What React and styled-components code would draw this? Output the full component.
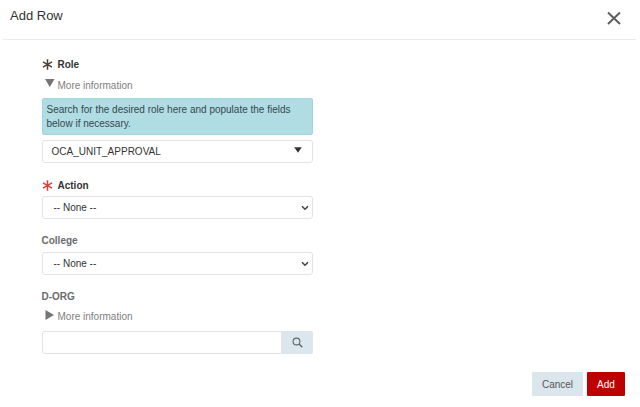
import React from "react";
import styled, { createGlobalStyle } from "styled-components";

const Global = createGlobalStyle`
  html, body { margin: 0; padding: 0; background: #fff; }
  body { font-family: "Liberation Sans", Arial, sans-serif; color: #333; }
`;

const Modal = styled.div`
  width: 640px;
  height: 407px;
  overflow: hidden;
  display: flex;
  flex-direction: column;
  background: #fff;
`;

const Header = styled.header`
  height: 39px;
  margin: 0 4px 0 3px;
  padding: 0 7px;
  display: flex;
  justify-content: space-between;
  border-bottom: 1px solid #ebebeb;
`;

const Title = styled.h1`
  margin: 8px 0 0;
  font-size: 13px;
  line-height: 16px;
  font-weight: 400;
  color: #333;
`;

const Close = styled.button`
  width: 16px;
  height: 16px;
  margin: 10px 7px 0 0;
  padding: 0;
  border: 0;
  background: none;
  display: flex;
`;

const Body = styled.main`
  flex: 1;
  width: 271px;
  margin-left: 41.5px;
  display: flex;
  flex-direction: column;
`;

const Label = styled.div`
  display: flex;
  align-items: center;
  gap: 5px;
  height: 14px;
  margin-top: ${(p) => p.$top}px;
  font-size: 10px;
  line-height: 14px;
  font-weight: 700;
  color: ${(p) => (p.$muted ? "#6b6b6b" : "#333")};

  svg {
    margin-top: -2px;
  }
`;

const More = styled.div`
  display: flex;
  align-items: center;
  gap: 2px;
  height: 14px;
  margin-top: ${(p) => p.$top}px;
  font-size: 10px;
  line-height: 14px;
  color: #808080;

  svg {
    margin: -4px 0 0 2px;
  }
`;

const Info = styled.div`
  box-sizing: border-box;
  height: 37px;
  margin-top: 5px;
  padding: 4px 4px 0;
  background: #b0dce4;
  border: 1px solid #a1d4de;
  border-radius: 2px;
  font-size: 10px;
  line-height: 14px;
  color: #35484d;
`;

const Field = styled.div`
  box-sizing: border-box;
  height: 23px;
  margin-top: ${(p) => p.$top}px;
  padding: 0 ${(p) => (p.$combo ? 10 : 3)}px 0 ${(p) => (p.$combo ? 9 : 11)}px;
  display: flex;
  align-items: center;
  justify-content: space-between;
  background: #fff;
  border: 1px solid #e3e3e3;
  border-radius: 3px;
  font-size: 10px;
  color: #333;
`;

const ComboArrow = styled.svg`
  margin-top: -3px;
`;

const SearchRow = styled.div`
  height: 23px;
  margin-top: 7px;
  display: flex;
`;

const SearchInput = styled.div`
  box-sizing: border-box;
  flex: 1;
  background: #fff;
  border: 1px solid #e3e3e3;
  border-radius: 3px 0 0 3px;
`;

const SearchButton = styled.div`
  width: 31px;
  display: flex;
  align-items: center;
  justify-content: center;
  background: #dbe6ed;
  border-radius: 0 2px 2px 0;
`;

const Footer = styled.footer`
  height: 35px;
  padding-right: 15px;
  display: flex;
  justify-content: flex-end;
  gap: 4px;
`;

const Button = styled.button`
  box-sizing: border-box;
  width: ${(p) => (p.$primary ? 38 : 51)}px;
  height: 24px;
  padding: 0;
  border: 0;
  border-radius: 1px;
  background: ${(p) => (p.$primary ? "#bd0000" : "#dae5ec")};
  color: ${(p) => (p.$primary ? "#fff" : "#555")};
  font-family: inherit;
  font-size: 10px;
`;

const Star = ({ color }) => (
  <svg width="11" height="11" viewBox="0 0 11 11" fill="none" stroke={color} strokeWidth="1.5">
    <path d="M5.5 0.3V10.7M1 2.9L10 8.1M10 2.9L1 8.1" />
  </svg>
);

const Triangle = ({ open }) => (
  <svg width="12" height="12" viewBox="0 0 12 12" fill="#757575">
    {open ? <path d="M1 1H10.5L5.75 9Z" /> : <path d="M1.5 1L10 6L1.5 11Z" />}
  </svg>
);

const Chevron = () => (
  <svg width="8" height="6" viewBox="0 0 8 6" fill="none" stroke="#444" strokeWidth="1.6">
    <path d="M1 1.2L4 4.2L7 1.2" />
  </svg>
);

export default function App() {
  return (
    <Modal>
      <Global />
      <Header>
        <Title>Add Row</Title>
        <Close aria-label="Close">
          <svg width="16" height="16" viewBox="0 0 16 16" stroke="#5f5f5f" strokeWidth="2">
            <path d="M2 2.5L14 14M14 2.5L2 14" />
          </svg>
        </Close>
      </Header>
      <Body>
        <Label $top={18}>
          <Star color="#4a4038" />
          Role
        </Label>
        <More $top={7}>
          <Triangle open />
          More information
        </More>
        <Info>Search for the desired role here and populate the fields below if necessary.</Info>
        <Field $top={5} $combo>
          OCA_UNIT_APPROVAL
          <ComboArrow width="8" height="6" viewBox="0 0 8 6" fill="#333">
            <path d="M0.2 0.3H7.8L4 5.8Z" />
          </ComboArrow>
        </Field>
        <Label $top={16}>
          <Star color="#d9413a" />
          Action
        </Label>
        <Field $top={3}>
          -- None --
          <Chevron />
        </Field>
        <Label $top={15} $muted>College</Label>
        <Field $top={4}>
          -- None --
          <Chevron />
        </Field>
        <Label $top={15} $muted>D-ORG</Label>
        <More $top={6}>
          <Triangle />
          More information
        </More>
        <SearchRow>
          <SearchInput />
          <SearchButton>
            <svg width="11" height="11" viewBox="0 0 11 11" fill="none" stroke="#5c6670" strokeWidth="1.1">
              <circle cx="4.5" cy="4.5" r="3.4" />
              <path d="M7 7L10.3 10.3" strokeWidth="1.5" />
            </svg>
          </SearchButton>
        </SearchRow>
      </Body>
      <Footer>
        <Button>Cancel</Button>
        <Button $primary>Add</Button>
      </Footer>
    </Modal>
  );
}
